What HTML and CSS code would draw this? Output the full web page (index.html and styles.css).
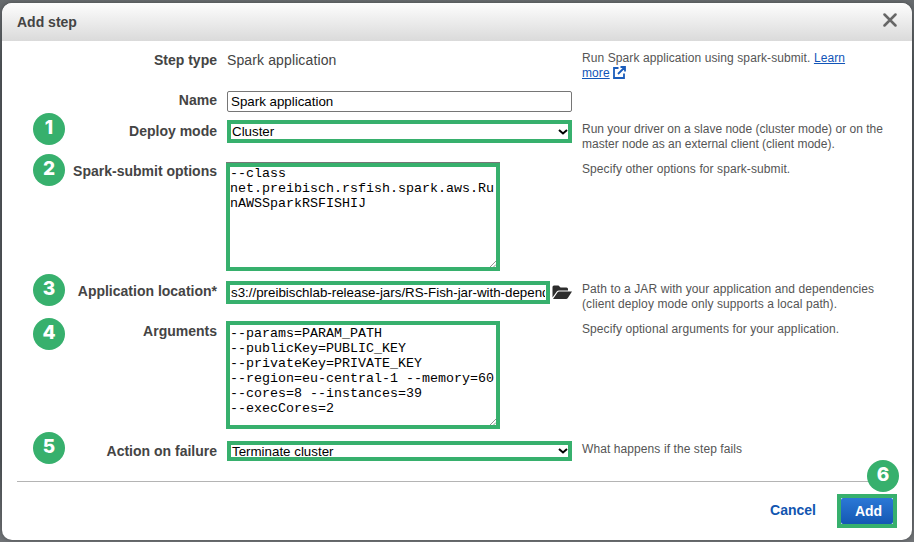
FILE: index.html
```html
<!DOCTYPE html>
<html lang="en">
<head>
<meta charset="utf-8">
<title>Add step</title>
<link rel="stylesheet" href="styles.css">
</head>
<body>
<main class="dialog">
  <header class="dialog-header">
    <h1 class="title">Add step</h1>
    <svg class="close" width="14" height="14" viewBox="0 0 14 14"><path d="M1.500 1.500l11 11M12.500 1.500l-11 11"/></svg>
  </header>
  <form class="form">
    <div class="row row-type">
      <label class="label">Step type</label>
      <div class="field static">Spark application</div>
      <p class="help">Run Spark application using spark-submit. <a href="#">Learn<br>more</a> <svg class="ext" width="13" height="13" viewBox="0 0 13 13"><path d="M5.500 2H1v10h10V7.500M7.500 1H12v4.500M12 1L5 8"/></svg></p>
    </div>
    <div class="row row-name">
      <label class="label">Name</label>
      <div class="field"><input class="input" value="Spark application"></div>
    </div>
    <div class="row">
      <span class="badge b1">1</span>
      <label class="label">Deploy mode</label>
      <div class="field"><div class="select mode"><span>Cluster</span><svg class="chev" width="10" height="6" viewBox="0 0 10 6"><path d="M1 1l4 3.500L9 1"/></svg></div></div>
      <p class="help tight">Run your driver on a slave node (cluster mode) or on the<br>master node as an external client (client mode).</p>
    </div>
    <div class="row row-tall">
      <span class="badge b2">2</span>
      <label class="label">Spark-submit options</label>
      <div class="field"><div class="area options"><pre>--class
net.preibisch.rsfish.spark.aws.Ru
nAWSSparkRSFISHIJ</pre><svg class="grip" width="6" height="6" viewBox="0 0 6 6"><path d="M0 6L6 0M3.500 6L6 3.500"/></svg></div></div>
      <p class="help">Specify other options for spark-submit.</p>
    </div>
    <div class="row">
      <span class="badge b3">3</span>
      <label class="label">Application location*</label>
      <div class="field location"><input class="path" value="s3://preibischlab-release-jars/RS-Fish-jar-with-dependencies.jar"><svg class="folder" width="20" height="15" viewBox="0 0 20 15"><path d="M.5 12.500V2Q.5.500 2 .5h4.500l2 2H14.500q1.500 0 1.500 1.500v1.500H7Q5.700 5.500 4.800 6.600Z"/><path d="M1 14L5.600 7.300q.6-.9 1.600-.9H20L15.800 13q-.6 1-1.800 1Z"/></svg></div>
      <p class="help">Path to a JAR with your application and dependencies<br>(client deploy mode only supports a local path).</p>
    </div>
    <div class="row row-tall">
      <span class="badge b4">4</span>
      <label class="label">Arguments</label>
      <div class="field"><div class="area args"><pre>--params=PARAM_PATH
--publicKey=PUBLIC_KEY
--privateKey=PRIVATE_KEY
--region=eu-central-1 --memory=60
--cores=8 --instances=39
--execCores=2</pre><svg class="grip" width="6" height="6" viewBox="0 0 6 6"><path d="M0 6L6 0M3.500 6L6 3.500"/></svg></div></div>
      <p class="help">Specify optional arguments for your application.</p>
    </div>
    <div class="row">
      <span class="badge b5">5</span>
      <label class="label">Action on failure</label>
      <div class="field"><div class="select action"><span>Terminate cluster</span><svg class="chev" width="10" height="6" viewBox="0 0 10 6"><path d="M1 1l4 3.500L9 1"/></svg></div></div>
      <p class="help">What happens if the step fails</p>
    </div>
  </form>
  <footer class="footer">
    <a class="cancel">Cancel</a>
    <div class="add-frame"><button class="add" type="button">Add</button></div>
    <span class="badge b6">6</span>
  </footer>
</main>
</body>
</html>
```
FILE: styles.css
```css
* { box-sizing: border-box; }
body {
  margin: 0;
  padding: 3px 2px 2px;
  height: 542px;
  overflow: hidden;
  background: linear-gradient(#676b6e, #52575b 12%, #52575b 85%, #707376);
  font-family: "Liberation Sans", Arial, sans-serif;
  color: #444;
}
.dialog {
  height: 537px;
  width: 910px;
  background: #fff;
  border-radius: 10px;
  box-shadow: 0 0 4px rgba(0, 0, 0, .3);
}
.dialog-header {
  display: flex;
  justify-content: space-between;
  height: 38px;
  padding: 10px 15px 0;
  border-radius: 10px 10px 0 0;
  background: linear-gradient(#fdfdfd, #dadada);
}
.title { margin: -1px 0 0; font-size: 14px; line-height: 20px; color: #444; }
.close { stroke: #666; stroke-width: 2.5; fill: none; stroke-linecap: round; }
.form { padding-top: 9px; margin: 0 15px; border-bottom: 1px solid #b4b4b4; height: 441px; }
.row {
  position: relative;
  display: grid;
  grid-template-columns: 200px 345px 1fr;
  column-gap: 10px;
  height: 40px;
}
.row-name { height: 31px; }
.row-tall { height: 120px; }
.label {
  text-align: right;
  font-size: 14px;
  font-weight: bold;
  line-height: 20px;
  white-space: nowrap;
}
.field { font-size: 13.33px; color: #000; }
.static { font-size: 14px; line-height: 20px; letter-spacing: .12px; color: #444; }
.help { margin: 1px 0 0; font-size: 12px; line-height: 15px; letter-spacing: .09px; color: #555; white-space: nowrap; }
.tight { letter-spacing: 0; }
.help a { color: #1155b8; text-decoration: underline; }
.ext { vertical-align: -2px; fill: none; stroke: #1b5dbb; stroke-width: 1.8; }
.input {
  display: block;
  width: 345px;
  height: 21px;
  margin-top: 1px;
  padding: 0 3px;
  border: 1px solid #767676;
  border-radius: 2px;
  font: 13.33px "Liberation Sans", Arial, sans-serif;
  color: #000;
}
.select {
  display: flex;
  align-items: center;
  justify-content: space-between;
  border: 4px solid #37b06d;
  padding: 0 0 0 1px;
  white-space: nowrap;
}
.mode { height: 23px; margin-top: -1px; }
.action { height: 20px; line-height: 14px; }
.action span { margin-top: 1px; }
.chev { fill: none; stroke: #000; stroke-width: 2; }
.area {
  position: relative;
  width: 274px;
  height: 108px;
  margin-left: -1px;
  border: 4px solid #37b06d;
}
.options { margin-top: 2px; box-shadow: 0 -1px 0 #777; }
.area pre {
  margin: 0;
  font: 13.33px/15px "Liberation Mono", "Courier New", monospace;
}
.options pre { margin-top: -1px; }
.args pre { margin-top: 1px; }
.grip { position: absolute; right: 0; bottom: 0; stroke: #777; stroke-width: .8; }
.location { display: flex; gap: 2px; margin-left: -1px; }
.path {
  width: 324px;
  height: 23px;
  padding: 0 1px;
  border: 4px solid #37b06d;
  font: 13.33px/15px "Liberation Sans", Arial, sans-serif;
  color: #000;
}
.folder { margin-top: 4px; fill: #2d2d2d; }
.badge {
  position: absolute;
  left: 16px;
  width: 32px;
  height: 32px;
  border-radius: 50%;
  background: #37b06d;
  color: #fff;
  font: 800 19px/29px Inter, sans-serif;
  text-align: center;
}
.b1 { top: -8px; }
.b2, .b3 { top: -7px; }
.b4 { top: -3px; }
.b5 { top: -9px; }
.footer {
  position: relative;
  display: flex;
  justify-content: flex-end;
  gap: 21px;
  padding: 12px 15px 0;
}
.cancel { margin-top: 6px; font-size: 14px; line-height: 20px; font-weight: bold; color: #1155b0; }
.add-frame { width: 60px; height: 34px; border: 4px solid #37b06d; }
.add {
  display: block;
  width: 52px;
  height: 26px;
  border: 0;
  border-radius: 2px;
  padding: 0 0 0 3px;
  background: linear-gradient(#2b78d6, #1458b3);
  color: #fff;
  font: bold 14px "Liberation Sans", Arial, sans-serif;
}
.b6 { left: 865px; top: -22px; }
```
